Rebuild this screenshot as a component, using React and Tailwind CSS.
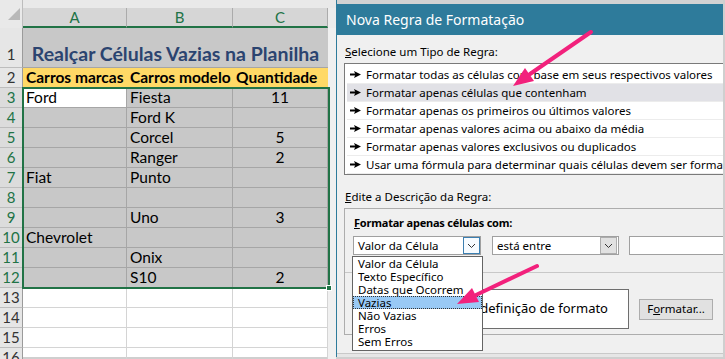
const rows = [
  ['Ford', 'Fiesta', '11'],
  ['', 'Ford K', ''],
  ['', 'Corcel', '5'],
  ['', 'Ranger', '2'],
  ['Fiat', 'Punto', ''],
  ['', '', ''],
  ['', 'Uno', '3'],
  ['Chevrolet', '', ''],
  ['', 'Onix', ''],
  ['', 'S10', '2'],
];

const rules = [
  'Formatar todas as células com base em seus respectivos valores',
  'Formatar apenas células que contenham',
  'Formatar apenas os primeiros ou últimos valores',
  'Formatar apenas valores acima ou abaixo da média',
  'Formatar apenas valores exclusivos ou duplicados',
  'Usar uma fórmula para determinar quais células devem ser formatadas',
];

const options = ['Valor da Célula', 'Texto Específico', 'Datas que Ocorrem', 'Vazias', 'Não Vazias', 'Erros', 'Sem Erros'];

const sheetFont = { fontFamily: "Lato, 'Noto Sans', sans-serif" };
const uiFont = { fontFamily: "'Noto Sans', 'Open Sans', sans-serif" };

function RuleArrow() {
  return (
    <svg width="11" height="7" viewBox="0 0 11 7" className="shrink-0">
      <rect x="0" y="2.5" width="6" height="2" fill="#000" />
      <polygon points="4,0 11,3.5 4,7 5.5,3.5" fill="#000" />
    </svg>
  );
}

function Chevron() {
  return (
    <svg width="9" height="6" viewBox="0 0 9 6">
      <polyline points="1,1 4.5,4.5 8,1" fill="none" stroke="#333" strokeWidth="1" />
    </svg>
  );
}

function RowHead({ n, active, tall }) {
  return (
    <div
      className={`w-[23px] shrink-0 flex justify-center border-r border-b border-r-[#9b9b9b] border-b-[#bdbdbd] text-[15px] ${tall ? 'items-end pb-[2px]' : 'items-center'} ${active ? 'bg-[#dcdcdc] text-[#217346]' : 'bg-[#e6e6e6] text-[#333]'}`}
    >
      {n}
    </div>
  );
}

function Sheet() {
  return (
    <div className="relative w-[336px] shrink-0 flex flex-col bg-white" style={sheetFont}>
      {/* column header */}
      <div className="flex h-[28px] shrink-0 bg-[#e9e9e9]">
        <div className="w-[23px] shrink-0 flex items-end justify-end border-r border-[#bdbdbd] pb-[8px] pr-[2px]">
          <svg width="12" height="12" viewBox="0 0 12 12">
            <polygon points="12,0 12,12 0,12" fill="#b8b8b8" />
          </svg>
        </div>
        {[['A', 'w-[104px]'], ['B', 'w-[106px]'], ['C', 'w-[95px]']].map(([l, w]) => (
          <div
            key={l}
            className={`${w} shrink-0 mt-[8px] flex items-center justify-center bg-[#d6d6d6] border-r border-[#ababab] border-b-2 border-b-[#217346] text-[15px] text-[#217346]`}
          >
            {l}
          </div>
        ))}
        <div className="flex-1 mt-[8px] bg-[#ececec]" />
      </div>

      {/* row 1 */}
      <div className="flex h-[40px] shrink-0">
        <RowHead n="1" tall />
        <div className="w-[305px] shrink-0 bg-[#c8c8c8] border-b border-[#a6a6a6] flex items-end justify-center pb-[4px] font-bold text-[19.5px] leading-none text-[#2b4470] whitespace-nowrap">
          Realçar Células Vazias na Planilha
        </div>
        <div className="flex-1 bg-[#f0f0f0]" />
      </div>

      {/* row 2 */}
      <div className="flex h-[20px] shrink-0">
        <RowHead n="2" />
        <div className="w-[305px] shrink-0 bg-[#ffd966] flex items-center font-bold text-[15.5px] text-black">
          <div className="w-[104px] pl-[3px] whitespace-nowrap">Carros marcas</div>
          <div className="w-[106px] pl-[3px] whitespace-nowrap">Carros modelo</div>
          <div className="w-[95px] pl-[3px] whitespace-nowrap">Quantidade</div>
        </div>
        <div className="flex-1 bg-[#f0f0f0]" />
      </div>

      {rows.map((r, i) => (
        <div key={i} className="flex h-[20px] shrink-0 text-[15.5px] text-black">
          <RowHead n={i + 3} active />
          <div className={`w-[104px] shrink-0 pl-[3px] flex items-center border-r border-b border-[#a6a6a6] whitespace-nowrap ${i === 0 ? 'bg-white' : 'bg-[#c8c8c8]'}`}>
            {r[0]}
          </div>
          <div className="w-[106px] shrink-0 pl-[3px] flex items-center border-r border-b border-[#a6a6a6] bg-[#c8c8c8]">{r[1]}</div>
          <div className="w-[95px] shrink-0 flex items-center justify-center border-r border-b border-[#a6a6a6] bg-[#c8c8c8]">{r[2]}</div>
          <div className="flex-1 bg-[#f0f0f0]" />
        </div>
      ))}

      {[13, 14, 15, 16].map((n) => (
        <div key={n} className="flex h-[20px] shrink-0 text-[15.5px]">
          <RowHead n={n} />
          <div className="w-[104px] shrink-0 border-r border-b border-[#d4d4d4]" />
          <div className="w-[106px] shrink-0 border-r border-b border-[#d4d4d4]" />
          <div className="w-[95px] shrink-0 border-r border-b border-[#d4d4d4]" />
          <div className="flex-1 bg-[#f0f0f0]" />
        </div>
      ))}

      {/* selection outline */}
      <div className="absolute left-[22px] top-[87px] w-[308px] h-[202px] border-2 border-[#217346]" />
      <div className="absolute left-[326px] top-[285px] w-[6px] h-[6px] bg-[#217346] border border-white" />
    </div>
  );
}

function Dialog() {
  return (
    <div className="relative flex-1 flex flex-col overflow-hidden border-l border-[#2e7b9b] bg-[#f0f0f0] text-[11.5px] text-black" style={uiFont}>
      <div className="h-[4px] shrink-0 bg-[#d2d2d2]" />
      <div className="h-[31px] shrink-0 bg-[#2e7b9b] flex items-center pl-[9px] text-[14px] text-white">Nova Regra de Formatação</div>

      <div className="pl-[7px] pt-[9px] flex flex-col">
        <div className="h-[16px] leading-[16px] pl-[1px]">
          <span className="underline">S</span>elecione um Tipo de Regra:
        </div>
        <div className="mt-[3px] w-[420px] h-[112px] border border-[#7a7a7a] bg-white p-[2px]">
          {rules.map((t, i) => (
            <div
              key={t}
              className={`h-[18px] flex items-center gap-[5px] pl-[3px] whitespace-nowrap border-b border-[#ececec] ${i === 1 ? 'bg-[#e1e1e6]' : ''}`}
            >
              <RuleArrow />
              <span>{t}</span>
            </div>
          ))}
        </div>

        <div className="mt-[14px] h-[16px] leading-[16px] pl-[1px]">
          <span className="underline">E</span>dite a Descrição da Regra:
        </div>
        <div className="mt-[3px] w-[420px] h-[127px] border border-[#adadad] flex flex-col">
          <div className="pl-[9px] pt-[6px] h-[16px] leading-[16px] font-bold text-[11px] tracking-[-0.2px] box-content">
            <span className="underline">F</span>ormatar apenas células com:
          </div>
          <div className="flex pl-[8px] mt-[5px] text-[11.5px]">
            <div className="w-[128px] h-[19px] bg-white border border-[#a0a0a0] flex items-center justify-between pl-[4px]">
              <span>Valor da Célula</span>
              <div className="w-[17px] h-[17px] border border-[#3c7fb1] bg-[#f6fbff] flex items-center justify-center">
                <Chevron />
              </div>
            </div>
            <div className="ml-[11px] w-[127px] h-[19px] bg-white border border-[#a0a0a0] flex items-center justify-between pl-[4px]">
              <span>está entre</span>
              <div className="w-[17px] h-[17px] border border-[#adadad] bg-[#e1e1e1] flex items-center justify-center mr-[1px]">
                <Chevron />
              </div>
            </div>
            <div className="ml-[10px] w-[120px] h-[19px] bg-white border border-[#a0a0a0]" />
          </div>
          <div className="mt-[17px] h-px bg-[#c8c8c8]" />
          <div className="flex items-center mt-[16px] pl-[32px]">
            <div className="w-[252px] h-[40px] bg-white border border-[#6e6e6e] flex items-center justify-end pr-[20px] text-[13px] whitespace-nowrap overflow-hidden">
              Nenhuma definição de formato
            </div>
            <div className="ml-[10px] w-[74px] h-[21px] bg-[#e1e1e1] border border-[#adadad] flex items-center justify-center">
              F<span className="underline">o</span>rmatar...
            </div>
          </div>
        </div>
      </div>

      {/* open dropdown list */}
      <div className="absolute left-[15px] top-[256px] w-[131px] bg-white border border-[#646464] pb-[2px]">
        {options.map((o) => (
          <div
            key={o}
            className={`h-[13px] leading-[13px] pl-[5px] text-[11.5px] whitespace-nowrap ${o === 'Vazias' ? 'bg-[#99c9f5] outline-1 outline-dotted outline-[#333] -outline-offset-1' : ''}`}
          >
            {o}
          </div>
        ))}
      </div>
      <div className="absolute left-0 right-0 bottom-0 h-[4px] border-t border-[#c9c9c9] bg-[#e6e6e6]" />
    </div>
  );
}

export default function App() {
  return (
    <div className="relative w-[725px] h-[359px] overflow-hidden bg-white flex flex-col">
      <div className="flex flex-1 min-h-0">
        <Sheet />
        <Dialog />
        <div className="w-[2px] shrink-0 bg-[#cfcfcf]" />
      </div>
      <div className="h-[2px] shrink-0 bg-[#cfcfcf]" />

      <svg className="absolute inset-0 pointer-events-none" width="725" height="359" viewBox="0 0 725 359">
        <line x1="591" y1="32" x2="530" y2="74" stroke="#f2217c" strokeWidth="4" strokeLinecap="round" />
        <polygon points="513,86 534,81 525,68" fill="#f2217c" />
        <line x1="537" y1="266" x2="476" y2="295" stroke="#f2217c" strokeWidth="4" strokeLinecap="round" />
        <polygon points="457,304 479,302 472,288" fill="#f2217c" />
      </svg>
    </div>
  );
}
